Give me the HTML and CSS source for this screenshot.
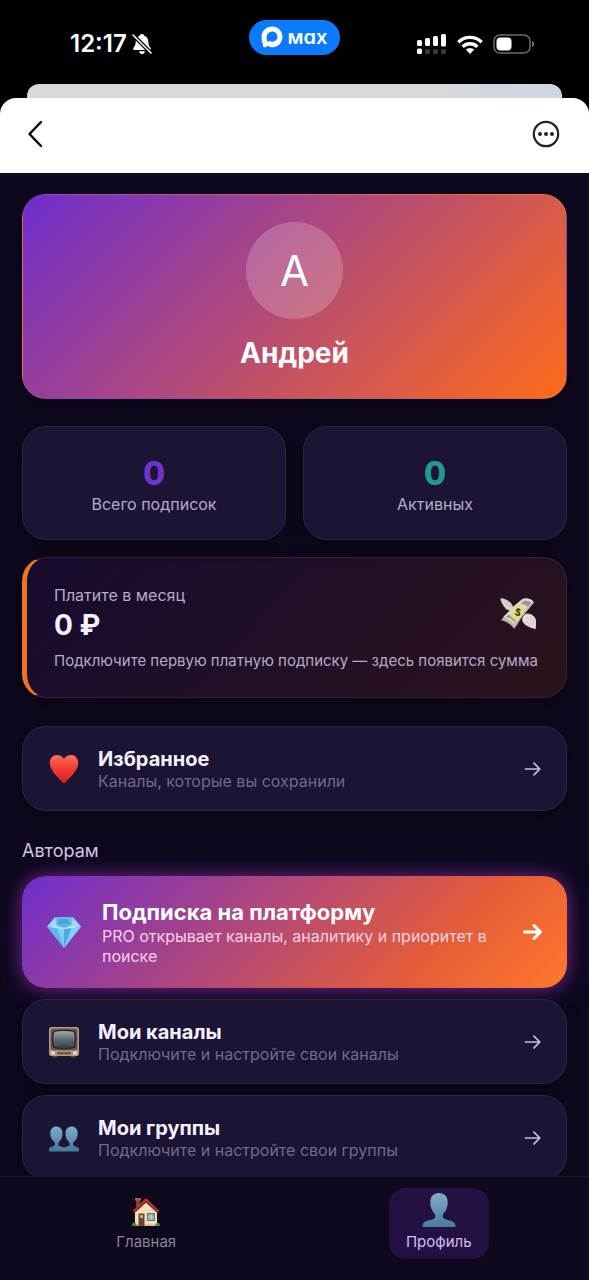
FILE: index.html
```html
<!DOCTYPE html>
<html lang="ru">
<head>
<meta charset="utf-8">
<meta name="viewport" content="width=device-width, initial-scale=1">
<title>Профиль</title>
<link rel="stylesheet" href="styles.css">
</head>
<body>
<div class="app">
  <div class="status">
    <div class="status-side">
      <span class="time">12:17</span>
      <svg class="bell" viewBox="0 0 20 22" aria-hidden="true">
        <path fill="#fff" d="M10 1c-1.300 0-2.100.8-2.300 1.800C4.800 3.700 3.800 6 3.700 8.600 3.600 12 2.900 13.200 1.500 14.700.8 15.600 1 17 2.300 17h15.400c1.300 0 1.500-1.400.8-2.300-1.400-1.500-2.100-2.700-2.200-6.100-.1-2.600-1.100-4.900-4-5.800C12.100 1.800 11.300 1 10 1zM7 18.300h6c-.2 1.600-1.400 2.700-3 2.700s-2.800-1.100-3-2.700z"/>
        <path stroke="#000" stroke-width="4" d="M1 2l18 18"/>
        <path stroke="#fff" stroke-width="1.600" stroke-linecap="round" d="M1 2l18 18"/>
      </svg>
    </div>
    <div class="pill">
      <svg class="pill-logo" viewBox="0 0 22 22" aria-hidden="true">
        <path fill="#fff" fill-rule="evenodd" d="M11.300.5C17 .5 21.500 5 21.500 10.800S17 21.200 11.500 21.200c-2 0-3-.4-4.600-1.500-1.100 1.300-4.500 2.400-4.700.6C2.200 18.600.5 15.500.5 11 .5 5 5 .5 11.300.5zM11.200 5.500c-3 0-5.100 2.200-5.500 4.900-.4 2.300.3 5.200 1 5.400.4.100 1.200-.6 1.700-1.100.9.600 1.700.9 2.700 1 2.900.1 5.400-2.100 5.400-5s-2.300-5.200-5.300-5.200z"/>
      </svg>
      <span>мax</span>
    </div>
    <div class="status-side">
      <svg class="signal" viewBox="0 0 30 20" aria-hidden="true">
        <g fill="#fff"><rect x="0" y="6" width="5" height="6" rx="1.500"/><rect x="8" y="4" width="5" height="8" rx="1.500"/><rect x="16" y="2" width="5" height="10" rx="1.500"/><rect x="24" y="0" width="5" height="12.500" rx="1.500"/><rect x="0" y="14.500" width="5" height="5.500" rx="1.500"/></g>
        <g fill="#3a3a3a"><rect x="8" y="15" width="5" height="5" rx="1.500"/><rect x="16" y="15" width="5" height="5" rx="1.500"/><rect x="24" y="15" width="5" height="5" rx="1.500"/></g>
      </svg>
      <svg class="wifi" viewBox="0 0 26 19" aria-hidden="true">
        <g fill="none" stroke="#fff" stroke-width="3.400"><path d="M1.300 7.200a16.700 16.700 0 0 1 23.400 0"/><path d="M5.600 11.700a10.600 10.600 0 0 1 14.800 0"/></g>
        <path fill="#fff" d="M13 19l-4.200-4.400a6 6 0 0 1 8.400 0z"/>
      </svg>
      <svg class="battery" viewBox="0 0 42 20" aria-hidden="true">
        <rect x="1" y="1" width="36" height="18" rx="6" fill="none" stroke="#6b6b6b" stroke-width="1.500"/>
        <path fill="#6b6b6b" d="M39 7c1.600.4 2.200 1.600 2.200 3s-.6 2.600-2.200 3z"/>
        <rect x="3.500" y="3.500" width="15" height="13" rx="4" fill="#fff"/>
      </svg>
    </div>
  </div>

  <div class="back-sheet"></div>
  <header class="topbar">
    <button class="icon-btn" type="button" aria-label="Назад">
      <svg width="16" height="28" viewBox="0 0 16 28"><path d="M14 2L2.500 14 14 26" fill="none" stroke="#000" stroke-width="2.400" stroke-linecap="round" stroke-linejoin="round"/></svg>
    </button>
    <button class="icon-btn" type="button" aria-label="Ещё">
      <svg width="28" height="28" viewBox="0 0 28 28"><circle cx="14" cy="14" r="12.200" fill="none" stroke="#222" stroke-width="2.200"/><g fill="#222"><circle cx="8" cy="14" r="2"/><circle cx="14" cy="14" r="2"/><circle cx="20" cy="14" r="2"/></g></svg>
    </button>
  </header>

  <main class="content">
    <section class="card hero">
      <div class="avatar">А</div>
      <h1 class="name">Андрей</h1>
    </section>

    <section class="stats">
      <div class="card stat"><strong class="stat-value violet">0</strong><span class="stat-label">Всего подписок</span></div>
      <div class="card stat"><strong class="stat-value teal">0</strong><span class="stat-label">Активных</span></div>
    </section>

    <section class="card pay">
      <div class="pay-row">
        <div>
          <div class="pay-label">Платите в месяц</div>
          <div class="pay-sum">0 ₽</div>
        </div>
        <svg class="money" viewBox="0 0 38 34" aria-hidden="true">
          <path fill="#ded7cf" stroke="#b9afa7" stroke-width=".6" d="M14 11C12 4 6 2 1 1c-.5 2 .3 3 1 3.500-.5 1.500.3 2.500 1.500 3-.3 1.500.8 2.500 2 2.800 0 1.500 1.500 2.700 3 2.500 1 1.200 3 1.500 4.500.2z"/>
          <path fill="#b9b9ab" d="M1 24l13-14L23 2c4-2 10-1 13 3.500L24 20c-3 3-5 9-9 13-3-4-8-8-14-9z"/>
          <path fill="#dcdccd" d="M3 21L16 8l8-6c4-2 9 0 11 2L22 18c-4 3-5 7-8 10-3-4-7-6-11-7z"/>
          <path fill="#97978c" d="M6 21c4 0 7 2 9 5l2-3c-2-3-5-5-8-5zM25 4c3-1 6 0 8 2l-4 4c-2-2-4-3-7-3z"/>
          <path fill="#e8d985" d="M18 7l9 6-9 13-8-7z"/>
          <path fill="none" stroke="#373323" stroke-width="1.700" stroke-linecap="round" d="M21 13.500c-1.500-2-3.500-1-3.300.5.200 1.700 3 1.300 3 3.300 0 2-3 2.200-4 0"/>
          <path fill="#e9e1db" stroke="#bfb2aa" stroke-width=".6" d="M26 18c5-2 11 1 12 7 .3 3-.2 6-.5 8-1.500.5-2.500 0-3-1-1.500.5-2.500 0-3-1-1.500.3-2.700-.3-3-1.500-1.300 0-2.500-.8-2.500-2-2-.5-3-4-2-6z"/>
          <path fill="none" stroke="#b9aca5" stroke-width=".7" d="M28 22c3 0 5 3 6 8M27 25c2 0 3 2 4 5M31 20c3 1 5 5 5 9M4 4c3 1 6 3 8 6M5 7c2 0 4 1 6 4"/>
        </svg>
      </div>
      <p class="pay-note">Подключите первую платную подписку — здесь появится сумма</p>
    </section>

    <a class="card row favourite" href="#favourites">
      <svg class="row-icon" viewBox="0 0 32 32" aria-hidden="true">
        <defs><linearGradient id="heart" x1="0" y1="0" x2="0" y2="1"><stop offset="0" stop-color="#ff6a55"/><stop offset=".5" stop-color="#f23a32"/><stop offset="1" stop-color="#d81f1c"/></linearGradient></defs>
        <path fill="url(#heart)" d="M16 6C14 2.600 11 1.800 8.500 2 4 2.300 1.500 6 1.800 10.500 2.300 18 9 23.500 16 30.500c7-7 13.700-12.500 14.200-20C30.500 6 28 2.300 23.500 2 21 1.800 18 2.600 16 6z"/>
        <path fill="#ff9a87" opacity=".6" d="M4 8c.5-3 4-4.500 7-3.500-2 .5-4.500 1.500-7 3.500zM19 6c2-2.500 6-2.500 8 .5-2.500-1.200-5-1.500-8-.5z"/>
      </svg>
      <span class="row-text"><b class="row-title">Избранное</b><span class="row-sub">Каналы, которые вы сохранили</span></span>
      <svg class="arrow" viewBox="0 0 18 16" aria-hidden="true"><path d="M1.500 8h14M10 2.200L15.800 8 10 13.800"/></svg>
    </a>

    <h2 class="section-title">Авторам</h2>

    <div class="list">
      <a class="row pro" href="#pro">
        <svg class="row-icon pro-icon" viewBox="0 0 34 32" aria-hidden="true">
          <path fill="#4aa9ea" d="M1 11L8.500 2h17L33 11 17 31z"/>
          <path fill="#9edcfb" d="M8.500 2L17 5l8.500-3L33 11l-9-1-7-5-7 5-9 1z"/>
          <path fill="#69bdf1" d="M8.500 2h17L24 10H10z"/>
          <path fill="#4ba3e2" d="M12 4h9l2 5H11z"/>
          <path fill="#b5e8fe" d="M1 11l9-1 7 2 7-2 9 1-9 1.700-7 .6-7-.6z"/>
          <path fill="#79cff8" d="M10 12.500l7 .8V31z"/>
          <path fill="#4da8e8" d="M24 12.500l-7 .8V31z"/>
          <path fill="#5cb6ef" d="M1 11l9 1.500L17 31z"/>
          <path fill="#82d2f8" d="M33 11l-9 1.500L17 31z"/>
        </svg>
        <span class="row-text pro-text"><b class="row-title pro-title">Подписка на платформу</b><span class="row-sub pro-sub">PRO открывает каналы, аналитику и приоритет в поиске</span></span>
        <svg class="arrow pro-arrow" viewBox="0 0 18 16" aria-hidden="true"><path d="M1.500 8h14M10 2.200L15.800 8 10 13.800"/></svg>
      </a>

      <a class="card row" href="#channels">
        <svg class="row-icon" viewBox="0 0 32 32" aria-hidden="true">
          <defs><linearGradient id="tube" x1="0" y1="0" x2="0" y2="1"><stop offset="0" stop-color="#9cabaa"/><stop offset=".5" stop-color="#5e6e6f"/><stop offset="1" stop-color="#344043"/></linearGradient></defs>
          <path fill="#5e4639" d="M4 29h6l-1 2.500H5zM22 29h6l-1 2.500h-4z"/>
          <rect x="1" y="1" width="30" height="29" rx="2.500" fill="#b49a80"/>
          <rect x="2.500" y="2.500" width="27" height="22" rx="2" fill="#71594a"/>
          <path fill="#2a2525" d="M5 5c6-1.700 16-1.700 22 0 1.800 5 1.800 12 0 17-6 1.700-16 1.700-22 0C3.200 17 3.200 10 5 5z"/>
          <path fill="url(#tube)" d="M6.300 6c6-1.500 13.400-1.500 19.400 0 1.500 5 1.500 10 0 15-6 1.500-13.400 1.500-19.400 0-1.500-5-1.500-10 0-15z"/>
          <rect x="9" y="26" width="14" height="2.500" fill="#765b43"/>
          <circle cx="5" cy="27" r="2" fill="#eadbc9"/><circle cx="27" cy="27" r="2" fill="#eadbc9"/>
        </svg>
        <span class="row-text"><b class="row-title">Мои каналы</b><span class="row-sub">Подключите и настройте свои каналы</span></span>
        <svg class="arrow" viewBox="0 0 18 16" aria-hidden="true"><path d="M1.500 8h14M10 2.200L15.800 8 10 13.800"/></svg>
      </a>

      <a class="card row" href="#groups">
        <svg class="row-icon" viewBox="0 0 32 32" aria-hidden="true">
          <defs><linearGradient id="bust" x1="0" y1="0" x2="0" y2="1"><stop offset="0" stop-color="#80abc9"/><stop offset="1" stop-color="#47779f"/></linearGradient></defs>
          <path fill="url(#bust)" d="M1 29.500V27c.5-2.300 4-2 5.500-3.500.7-1 .6-2.500-.4-3.700C3.800 18 2 14.500 2.300 11c0-4 2.700-6.500 6-6.500s6.200 2.500 6.200 6.500c.3 3.500-1.200 7-3.300 8.800-1 1.200-1.300 2.700-.5 3.700 1 1 3.600 1.300 5.300 2 1.700-.7 4.300-1 5.300-2 .8-1 .5-2.500-.5-3.700-2.100-1.800-3.600-5.300-3.300-8.800 0-4 2.900-6.500 6.200-6.500s6 2.500 6 6.500c.3 3.500-1.500 7-3.800 8.800-1 1.200-1.100 2.700-.4 3.700C27 25 30.500 24.700 31 27v2.500z"/>
        </svg>
        <span class="row-text"><b class="row-title">Мои группы</b><span class="row-sub">Подключите и настройте свои группы</span></span>
        <svg class="arrow" viewBox="0 0 18 16" aria-hidden="true"><path d="M1.500 8h14M10 2.200L15.800 8 10 13.800"/></svg>
      </a>
    </div>
  </main>

  <nav class="tabs">
    <a class="tab" href="#home">
      <svg class="tab-icon" viewBox="0 0 34 34" aria-hidden="true">
        <path fill="#8d3b34" d="M7 6h4v8H7z"/><path fill="#b5544a" d="M6 5h6v2.500H6z"/>
        <path fill="#f2dfba" d="M6 17L17 7l11 11v15H6z"/>
        <path fill="#dcc392" d="M6 31h22v2H6z"/>
        <path fill="#b03731" d="M17 5L30 17.500l-1.500 2.500L17 9.500 5.500 20 4 17.500z"/>
        <path fill="#7e231f" d="M5.500 20L17 9.500 28.500 20l.5-1L17 8 5 19z"/>
        <path fill="#70452d" d="M9.500 20.500h6V33h-6z"/><path fill="#9eb9c0" d="M11 22h3v3h-3z"/>
        <path fill="#8c6b50" d="M18 20h8v8h-8z"/><path fill="#79aecb" d="M19 21h6v6h-6z"/><path stroke="#d7e8ee" stroke-width=".7" d="M22 21v6M19 24h6"/>
        <path fill="#568b3c" d="M3 33c0-3 2-4.500 4-2.500L8 33zM26 33c.5-3 3-4.500 4.500-2 .6.700.5 1.400.5 2z"/>
      </svg>
      <span>Главная</span>
    </a>
    <a class="tab active" href="#profile" aria-current="page">
      <svg class="tab-icon" viewBox="0 0 34 34" aria-hidden="true">
        <defs><linearGradient id="user" x1="0" y1="0" x2="0" y2="1"><stop offset="0" stop-color="#82abca"/><stop offset="1" stop-color="#4b7a9e"/></linearGradient></defs>
        <path fill="url(#user)" d="M17 0c5.500 0 8.700 3.700 8.700 9 .2 5-1.700 9-4.500 12-.7 1.500-.6 3.300.3 4.200 3 2.300 9 1.800 11.300 5 .5 1 .7 2.300.7 3.800H.500c0-1.500.2-2.800.7-3.800 2.300-3.200 8.300-2.700 11.300-5 .9-.9 1-2.700.3-4.200-2.800-3-4.700-7-4.500-12C8.300 3.700 11.500 0 17 0z"/>
      </svg>
      <span>Профиль</span>
    </a>
  </nav>
</div>
</body>
</html>
```
FILE: styles.css
```css
* { box-sizing: border-box; }

body {
  margin: 0;
  background: #000;
  color: #f5f1ff;
  font-family: Inter, "Noto Sans", sans-serif;
}

h1, h2, p { margin: 0; }
a { color: inherit; text-decoration: none; }
svg { display: block; flex: none; }

.app {
  display: flex;
  flex-direction: column;
  height: 100vh;
}

/* Status bar */
.status {
  display: grid;
  grid-template-columns: 1fr auto 1fr;
  align-items: center;
  flex: none;
  padding: 18px 0 28px;
}
.status-side { display: flex; align-items: center; gap: 5px; padding: 14px 0 0 70px; }
.status-side:last-child { justify-content: flex-end; gap: 10px; padding: 14px 54px 0 0; }
.time { font-size: 24px; line-height: 24px; font-weight: 600; color: #fff; }
.bell { width: 20px; height: 22px; }
.signal { width: 30px; height: 20px; }
.wifi { width: 26px; height: 19px; }
.battery { width: 42px; height: 20px; }
.pill {
  display: flex;
  align-items: center;
  gap: 5px;
  height: 35px;
  padding: 0 13px 0 12px;
  border-radius: 18px;
  background: #0a7bff;
  color: #fff;
  font-size: 20px;
  line-height: 24px;
  font-weight: 600;
  font-feature-settings: "cv11";
}
.pill-logo { width: 22px; height: 22px; }

/* Sheet header */
.back-sheet {
  flex: none;
  height: 14px;
  margin: 0 27px;
  border-radius: 12px 12px 0 0;
  background: linear-gradient(90deg, #d9d9d9 70%, #ccd6e5);
}
.topbar {
  display: flex;
  justify-content: space-between;
  align-items: center;
  flex: none;
  padding: 22px 29px 25px 27px;
  border-radius: 16px 16px 0 0;
  background: #fff;
}
.icon-btn { padding: 0; border: 0; background: none; cursor: pointer; }

/* Content */
.content {
  flex: 1;
  min-height: 0;
  overflow-y: auto;
  scrollbar-width: none;
  padding: 21px 22px 0;
  background: #0d081c;
}
.card {
  border: 1px solid #2c2643;
  border-radius: 24px;
  background: #1b1435;
  box-shadow: 0 6px 18px rgba(0, 0, 0, .3);
}
.hero {
  display: flex;
  flex-direction: column;
  align-items: center;
  gap: 16px;
  padding: 27px 24px;
  border-color: rgba(255, 255, 255, .08);
  background: linear-gradient(135deg, #6e2dce, #ff6b1a);
}
.avatar {
  display: flex;
  align-items: center;
  justify-content: center;
  width: 97px;
  height: 97px;
  border-radius: 50%;
  background: rgba(255, 255, 255, .2);
  color: #fff;
  font-size: 42px;
}
.name { font-size: 28px; line-height: 36px; font-weight: 700; color: #fff; }

.stats {
  display: grid;
  grid-template-columns: 1fr 1fr;
  gap: 17px;
  margin: 27px 0 17px;
}
.stat {
  display: flex;
  flex-direction: column;
  align-items: center;
  padding: 28px 12px 24px;
}
.stat-value { font-size: 32px; line-height: 38px; font-weight: 800; }
.violet { color: #6f35c8; }
.teal { color: #219b91; }
.stat-label { font-size: 16px; line-height: 22px; color: #b5abcb; }

.pay {
  padding: 25px 22px 25px 27px;
  border-color: #3a2236;
  border-left: 5px solid #f07427;
  background: linear-gradient(135deg, #160b2f, #2b131c);
}
.pay-row { display: flex; align-items: center; justify-content: space-between; padding-right: 8px; }
.pay-label { font-size: 16px; line-height: 24px; color: #b5abcb; }
.pay-sum { font-size: 28px; line-height: 36px; font-weight: 700; }
.money { width: 36px; height: 33px; }
.pay-note { margin-top: 6px; font-size: 15px; line-height: 23px; color: #b5abcb; }

.row {
  display: flex;
  align-items: center;
  padding: 20px 24px 19px 25px;
}
.favourite { margin-top: 28px; }
.row-icon { width: 32px; height: 32px; }
.row-text {
  display: flex;
  flex: 1;
  flex-direction: column;
  min-width: 0;
  margin: 0 24px 0 18px;
}
.row-title { font-size: 20px; line-height: 24px; font-weight: 700; }
.row-sub { font-size: 16px; line-height: 20px; color: #736b87; }
.arrow {
  width: 18px;
  height: 16px;
  fill: none;
  stroke: #c9c1dc;
  stroke-width: 1.7;
  stroke-linecap: round;
  stroke-linejoin: round;
}

.section-title {
  margin: 27px 0 12px;
  font-size: 18px;
  line-height: 26px;
  font-weight: 400;
  color: #d0c8e0;
}
.list { display: flex; flex-direction: column; gap: 11px; }
.pro {
  padding: 22px 24px;
  border-radius: 24px;
  background: linear-gradient(135deg, #6e2dce, #e65d38 75%, #ff782c);
  box-shadow: 0 0 16px rgba(190, 55, 170, .5), 0 4px 32px rgba(110, 45, 206, .35);
}
.pro-icon { width: 36px; height: 34px; }
.pro-text { margin: 0 24px 0 20px; }
.pro-title { font-size: 22px; line-height: 28px; color: #fff; }
.pro-sub { color: #f4d3e6; }
.pro-arrow { width: 20px; height: 18px; stroke: #fff; stroke-width: 2.8; }

/* Bottom tabs */
.tabs {
  display: flex;
  justify-content: space-around;
  flex: none;
  padding: 11px 4px 21px 0;
  border-top: 1px solid #1d172b;
  background: #0e091d;
}
.tab {
  display: flex;
  flex-direction: column;
  align-items: center;
  gap: 4px;
  min-width: 100px;
  padding: 5px 12px 7px;
  border-radius: 16px;
  color: #8a829b;
  font-size: 15px;
  line-height: 21px;
}
.tab-icon { width: 34px; height: 34px; }
.active { background: #241144; color: #d4bbf5; }
```
